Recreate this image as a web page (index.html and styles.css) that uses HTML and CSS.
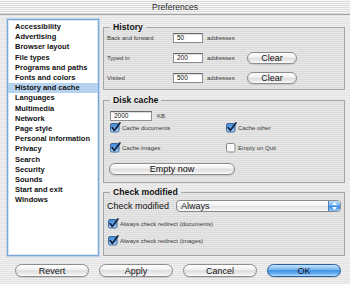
FILE: index.html
```html
<!DOCTYPE html>
<html lang="en">
<head>
    <meta charset="utf-8" />
    <title>Preferences</title>
    <link rel="stylesheet" href="styles.css">
</head>
<body>
    <div class="titlebar">Preferences</div>

    <div class="content">
        <ul class="section-list">
            <li>Accessibility</li>
            <li>Advertising</li>
            <li>Browser layout</li>
            <li>File types</li>
            <li>Programs and paths</li>
            <li>Fonts and colors</li>
            <li class="selected">History and cache</li>
            <li>Languages</li>
            <li>Multimedia</li>
            <li>Network</li>
            <li>Page style</li>
            <li>Personal information</li>
            <li>Privacy</li>
            <li>Search</li>
            <li>Security</li>
            <li>Sounds</li>
            <li>Start and exit</li>
            <li>Windows</li>
        </ul>

        <div class="panel">
            <fieldset class="group history">
                <legend>History</legend>
                <div class="history-grid">
                    <span class="small">Back and forward</span>
                    <span class="field">50</span>
                    <span class="small">addresses</span>
                    <span></span>

                    <span class="small">Typed in</span>
                    <span class="field">200</span>
                    <span class="small">addresses</span>
                    <button class="btn btn-small">Clear</button>

                    <span class="small">Visited</span>
                    <span class="field">500</span>
                    <span class="small">addresses</span>
                    <button class="btn btn-small">Clear</button>
                </div>
            </fieldset>

            <fieldset class="group disk">
                <legend>Disk cache</legend>
                <div class="size-row">
                    <span class="field field-wide">2000</span>
                    <span class="small">KB</span>
                </div>
                <div class="check-grid">
                    <label class="check">
                        <svg class="cb" width="11" height="11" viewBox="0 0 11 11">
                            <defs>
                                <linearGradient id="cbFill" x1="0" y1="0" x2="0" y2="1">
                                    <stop offset="0" stop-color="#3f86d6" />
                                    <stop offset="0.5" stop-color="#6aa9ea" />
                                    <stop offset="1" stop-color="#b7dafb" />
                                </linearGradient>
                            </defs>
                            <rect x="0.5" y="1.5" width="8.5" height="8.5" rx="1.5" fill="url(#cbFill)" stroke="#3d6796" />
                            <path d="M2.2 5.6 L4.3 8.4 L9.9 0.9" fill="none" stroke="#15223f" stroke-width="1.7" stroke-linecap="round" stroke-linejoin="round" />
                        </svg>
                        <span class="small">Cache documents</span>
                    </label>
                    <label class="check">
                        <svg class="cb" width="11" height="11" viewBox="0 0 11 11">
                            <rect x="0.5" y="1.5" width="8.5" height="8.5" rx="1.5" fill="url(#cbFill)" stroke="#3d6796" />
                            <path d="M2.2 5.6 L4.3 8.4 L9.9 0.9" fill="none" stroke="#15223f" stroke-width="1.7" stroke-linecap="round" stroke-linejoin="round" />
                        </svg>
                        <span class="small">Cache other</span>
                    </label>
                    <label class="check">
                        <svg class="cb" width="11" height="11" viewBox="0 0 11 11">
                            <rect x="0.5" y="1.5" width="8.5" height="8.5" rx="1.5" fill="url(#cbFill)" stroke="#3d6796" />
                            <path d="M2.2 5.6 L4.3 8.4 L9.9 0.9" fill="none" stroke="#15223f" stroke-width="1.7" stroke-linecap="round" stroke-linejoin="round" />
                        </svg>
                        <span class="small">Cache images</span>
                    </label>
                    <label class="check">
                        <svg class="cb" width="11" height="11" viewBox="0 0 11 11">
                            <rect x="0.5" y="1.5" width="8.5" height="8.5" rx="1.5" fill="#fbfbfb" stroke="#8a8a8a" />
                        </svg>
                        <span class="small">Empty on Quit</span>
                    </label>
                </div>
                <button class="btn btn-wide">Empty now</button>
            </fieldset>

            <fieldset class="group modified">
                <legend>Check modified</legend>
                <div class="select-row">
                    <span class="select-label">Check modified</span>
                    <div class="select">
                        <span class="select-value">Always</span>
                        <span class="select-cap">
                            <svg width="7" height="10" viewBox="0 0 7 10">
                                <path d="M3.5 1 L6 4 L1 4 Z M3.5 9 L6 6 L1 6 Z" fill="#fff" />
                            </svg>
                        </span>
                    </div>
                </div>
                <label class="check">
                    <svg class="cb" width="11" height="11" viewBox="0 0 11 11">
                        <rect x="0.5" y="1.5" width="8.5" height="8.5" rx="1.5" fill="url(#cbFill)" stroke="#3d6796" />
                        <path d="M2.2 5.6 L4.3 8.4 L9.9 0.9" fill="none" stroke="#15223f" stroke-width="1.7" stroke-linecap="round" stroke-linejoin="round" />
                    </svg>
                    <span class="small">Always check redirect (documents)</span>
                </label>
                <label class="check">
                    <svg class="cb" width="11" height="11" viewBox="0 0 11 11">
                        <rect x="0.5" y="1.5" width="8.5" height="8.5" rx="1.5" fill="url(#cbFill)" stroke="#3d6796" />
                        <path d="M2.2 5.6 L4.3 8.4 L9.9 0.9" fill="none" stroke="#15223f" stroke-width="1.7" stroke-linecap="round" stroke-linejoin="round" />
                    </svg>
                    <span class="small">Always check redirect (images)</span>
                </label>
            </fieldset>
        </div>
    </div>

    <div class="actions">
        <button class="btn">Revert</button>
        <button class="btn">Apply</button>
        <button class="btn">Cancel</button>
        <button class="btn btn-default">OK</button>
    </div>
</body>
</html>
```

FILE: styles.css
```css
* {
    margin: 0;
    padding: 0;
    box-sizing: border-box;
}

html, body {
    width: 350px;
    height: 284px;
    overflow: hidden;
}

body {
    font-family: "Liberation Sans", Arial, sans-serif;
    color: #1a1a1a;
    background: repeating-linear-gradient(#efefef 0, #efefef 1px, #e4e4e4 1px, #e4e4e4 2px);
}

/* window title */
.titlebar {
    height: 15px;
    font-size: 8.5px;
    line-height: 14px;
    text-align: center;
    color: #2a2a2a;
    background: repeating-linear-gradient(#f7f7f7 0, #f7f7f7 1px, #dadada 1px, #dadada 2px);
    border-bottom: 1px solid #a6a6a6;
}

.content {
    display: flex;
    gap: 4px;
    padding: 4px 5px 0 7px;
}

/* left list of sections */
.section-list {
    list-style: none;
    width: 92px;
    height: 237px;
    flex-shrink: 0;
    padding: 2px 0 0;
    background: #fff;
    border: 1px solid #7ea8d2;
    box-shadow: 0 0 0 1px #bcd5ee, inset 0 0 0 1px #d7e6f5;
}

.section-list li {
    font-size: 7.5px;
    font-weight: 700;
    line-height: 10.2px;
    padding-left: 7px;
    color: #111;
    white-space: nowrap;
}

.section-list li.selected {
    background: #b5d2ef;
}

/* right panel */
.panel {
    flex: 1;
    padding-top: 3px;
}

.group {
    border: 1px solid #a5a5a5;
    padding: 0 3px 5px;
    background: repeating-linear-gradient(#e6e6e6 0, #e6e6e6 1px, #dcdcdc 1px, #dcdcdc 2px);
}

.group legend {
    font-size: 8.7px;
    font-weight: 700;
    line-height: 10px;
    padding: 0 3px;
    margin-left: 3px;
    color: #111;
}

.small {
    font-size: 6px;
    color: #3a3a3a;
    white-space: nowrap;
}

.field {
    display: block;
    height: 10px;
    background: #fff;
    border: 1px solid #8e8e8e;
    border-top-color: #6a6a6a;
    box-shadow: inset 0 1px 1px rgba(0, 0, 0, 0.15);
    font-size: 6.5px;
    line-height: 8px;
    padding-left: 3px;
    color: #111;
}

/* history */
.history-grid {
    display: grid;
    grid-template-columns: 66px 34px 40px 50px;
    grid-auto-rows: 12px;
    row-gap: 8px;
    align-items: center;
}

.history-grid .field {
    width: 30px;
}

/* disk cache */
.disk {
    margin-top: 5px;
    padding: 5px 3px 7px;
}

.size-row {
    display: flex;
    align-items: center;
    gap: 5px;
    height: 11px;
    padding-left: 3px;
}

.field-wide {
    width: 42px;
}

.check-grid {
    display: grid;
    grid-template-columns: 116px 1fr;
    grid-auto-rows: 10px;
    row-gap: 10px;
    margin: 2px 0 0 3px;
}

.check {
    display: flex;
    align-items: center;
    gap: 1px;
    height: 10px;
}

.cb {
    flex-shrink: 0;
    margin-top: -1px;
}

/* buttons */
.btn {
    display: flex;
    align-items: center;
    justify-content: center;
    height: 13px;
    border: 1px solid #8c8c8c;
    border-radius: 7px;
    background: linear-gradient(#fefefe 0%, #f2f2f2 40%, #dedede 52%, #ebebeb 80%, #fdfdfd 100%);
    box-shadow: 0 1px 1px rgba(0, 0, 0, 0.12);
    font-family: "Liberation Sans", Arial, sans-serif;
    font-size: 9px;
    color: #111;
}

.btn-small {
    width: 50px;
    height: 12px;
}

.btn-wide {
    width: 126px;
    height: 12px;
    margin: 10px 0 0 2px;
}

.btn-default {
    border-color: #2d5f9c;
    background: linear-gradient(#c4e2fd 0%, #7cb9f2 40%, #3f8fe3 52%, #6fb2f3 80%, #b9e0ff 100%);
}

/* check modified */
.modified {
    margin-top: 4px;
    padding: 3px 3px 9px;
}

.select-row {
    display: flex;
    align-items: center;
    height: 12px;
    margin-bottom: 7px;
}

.select-label {
    width: 69px;
    font-size: 9px;
    color: #111;
}

.select {
    display: flex;
    width: 165px;
    height: 12px;
    border: 1px solid #8a8a8a;
    border-radius: 4px;
    background: linear-gradient(#fdfdfd 0%, #f2f2f2 45%, #e2e2e2 55%, #f7f7f7 100%);
    overflow: hidden;
}

.select-value {
    flex: 1;
    font-size: 9px;
    line-height: 10px;
    padding-left: 4px;
}

.select-cap {
    display: flex;
    align-items: center;
    justify-content: center;
    width: 12px;
    border-left: 1px solid #4c7fb8;
    background: linear-gradient(#bfe0fc 0%, #6eaef0 45%, #3a8ae3 55%, #8fc8f8 100%);
}

.modified .check {
    margin-left: 1px;
}

.modified .check + .check {
    margin-top: 7px;
}

/* bottom row */
.actions {
    display: flex;
    gap: 10px;
    padding: 8px 0 0 15px;
}

.actions .btn {
    width: 74px;
}
```
